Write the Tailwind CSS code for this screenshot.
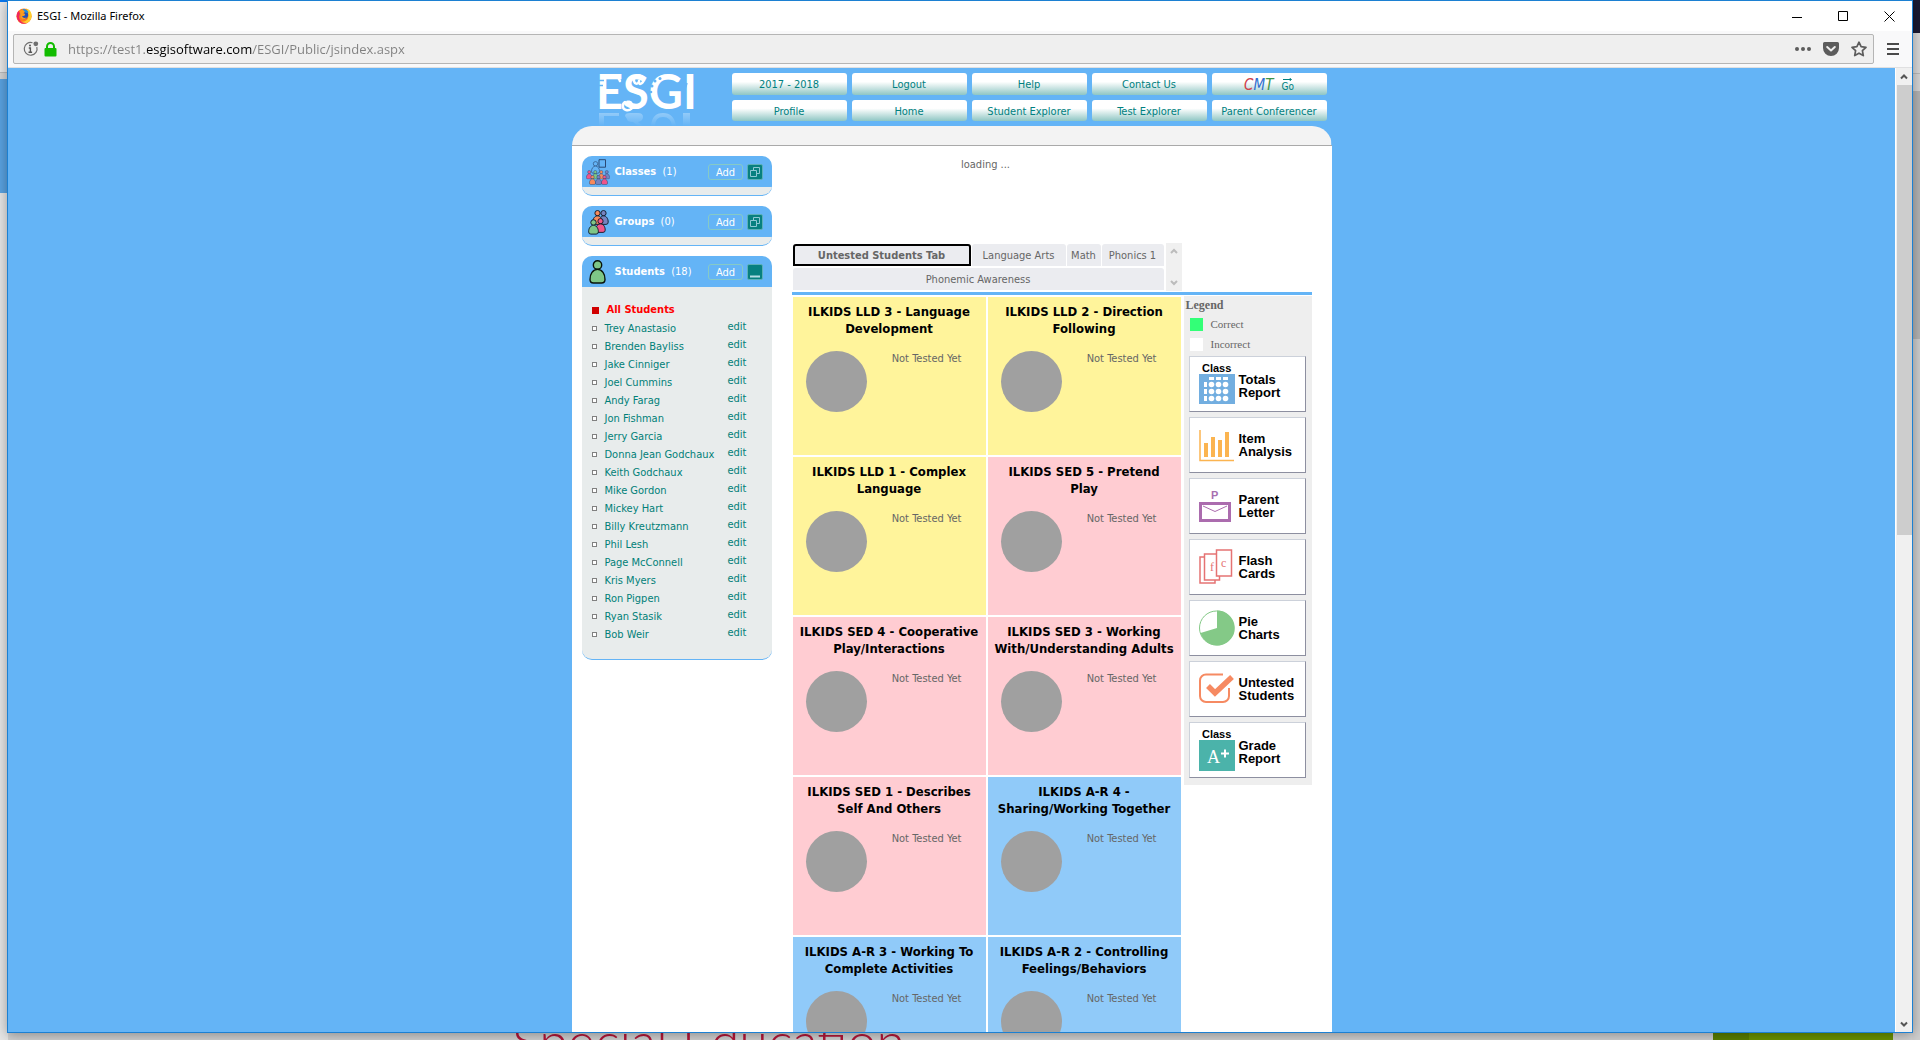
<!DOCTYPE html>
<html lang="en">
<head>
<meta charset="utf-8">
<title>ESGI</title>
<script src="https://cdn.jsdelivr.net/npm/@tailwindcss/browser@4"></script>
</head>
<body class="relative h-screen overflow-hidden bg-[#e4e4e4] font-['DejaVu_Sans_Condensed','DejaVu_Sans',sans-serif] text-[11px] leading-[18px] text-[#666]">

<!-- window lying behind the browser -->
<div class="absolute inset-0 flex justify-between overflow-hidden bg-linear-to-b from-[#e8e8e8] to-[#d2d2d2]" aria-hidden="true">
  <div class="flex w-2 flex-col">
    <div class="h-[2px] bg-[#0a78f0]"></div>
    <div class="h-[71px] border-b border-[#bbb] bg-[#e9e9e9]"></div>
    <div class="h-[6px] bg-[#d4d4d4]"></div>
    <div class="h-[114px] bg-[#5aa3e2]"></div>
    <div class="flex-1 bg-[#e6e6e6]"></div>
  </div>
  <div class="flex w-2 flex-col">
    <div class="h-[33px] bg-[#191932]"></div>
    <div class="h-[41px] border-b border-[#bbb] bg-[#dadada]"></div>
    <div class="h-[17px] bg-[#d6d6d6]"></div>
    <div class="h-[248px] bg-[#b4b4b4]"></div>
    <div class="flex-1 bg-[#cfcfcf]"></div>
  </div>
</div>
<p class="absolute bottom-[-28px] left-[512px] font-['Lato','Open_Sans',sans-serif] text-[52px] leading-[56px] font-light text-[#b5173a]">Special Education</p>
<div class="absolute right-[27px] bottom-0 flex h-[12px] w-[180px] bg-[#6b9400]"><div class="w-9 bg-[#5b8000]"></div></div>

<!-- browser window -->
<div class="relative mx-[7px] flex h-[calc(100vh-7px)] flex-col border border-[#1c80d2] bg-white shadow-[0_2px_12px_rgba(0,0,0,0.35)]">
  <header class="flex h-[30px] shrink-0 items-center pl-2 text-black">
    <svg class="mr-[5px] size-4" viewBox="0 0 16 16" aria-hidden="true">
      <circle cx="8" cy="8.200" r="7.600" fill="#ff7a18"/>
      <path d="M10 .6c3.800.8 6 4 5.600 8-.4 4-3.600 7-7.600 7-2.600 0-5-1.200-6.400-3.400 4 2.800 9 1.600 10.400-2 .9-2.600.5-5.600-2-9.600z" fill="#ffcf2e"/>
      <path d="M1 5.400C.2 9 1.200 12.400 3.800 14.400c2 1.500 5 1.700 7.200.6-3.600.4-6.800-1.400-7.600-4.600C3 8.400 3.200 6.800 4 5.600L2.400 2.800z" fill="#f0255e"/>
      <circle cx="8" cy="7" r="4.200" fill="#2450b8"/>
      <path d="M4 3c1.600-1.800 4.400-2.200 6.400-.8L9 4 7.400 5.200 9.200 6 8.400 7.800 6 8.200C7 10 9 10.400 10.600 9.200 9.800 11.800 5.400 12 4.200 9.200z" fill="#ff9a1c"/>
      <path d="M6.400 1.200C9 .8 11.600 2 12.600 4.600L10 5z" fill="#1f8fe0"/>
    </svg>
    <h1 class="flex-1 font-['Noto_Sans','Open_Sans',sans-serif]">ESGI - Mozilla Firefox</h1>
    <div class="flex items-center">
      <button class="flex h-[30px] w-[46px] items-center justify-center" aria-label="Minimize"><svg class="size-[11px]" viewBox="0 0 11 11"><path d="M0 6.500h10" stroke="#000"/></svg></button>
      <button class="flex h-[30px] w-[46px] items-center justify-center" aria-label="Maximize"><svg class="size-[11px]" viewBox="0 0 11 11"><path d="M.5.500h9v9h-9z" fill="none" stroke="#000"/></svg></button>
      <button class="flex h-[30px] w-[46px] items-center justify-center" aria-label="Close"><svg class="size-[11px]" viewBox="0 0 11 11"><path d="M.5.500l10 10M10.500.500l-10 10" stroke="#000"/></svg></button>
    </div>
  </header>

  <div class="flex h-[37px] shrink-0 items-center border-b border-[#e0e0e1] bg-[#f9f9fa] pr-[13px] pl-[5px]">
    <div class="flex h-[30px] flex-1 items-center rounded-xs border border-[#b5b5b5] bg-[#efefef] pr-[6px] pl-[9px]">
      <svg class="mr-[5px] size-4" viewBox="0 0 16 16" aria-hidden="true"><path d="M9.500 1.700A6.400 6.400 0 1 0 13.800 6" fill="none" stroke="#6e6e6e" stroke-width="1.200"/><circle cx="12.800" cy="2.800" r="2.400" fill="#6e6e6e"/><path d="M5.800 7h1.600v4M5.500 11.200h3.600" fill="none" stroke="#555" stroke-width="1.400"/><circle cx="7" cy="4.600" r="1" fill="#555"/></svg>
      <svg class="mr-[11px] h-[15px] w-[13px]" viewBox="0 0 13 15" aria-hidden="true"><path d="M3 7V4.500a3.500 3.500 0 0 1 7 0V7" fill="none" stroke="#12bc00" stroke-width="2"/><rect x=".5" y="6" width="12" height="8.500" rx="1" fill="#12bc00"/></svg>
      <input class="h-7 min-w-0 flex-1 bg-[linear-gradient(90deg,#808080_79px,#000_79px,#000_184px,#808080_184px)] bg-clip-text font-['Open_Sans','Noto_Sans',sans-serif] text-[13px] text-transparent outline-none" aria-label="Address" value="https://test1.esgisoftware.com/ESGI/Public/jsindex.aspx">
      <button class="mr-3" aria-label="Page actions"><svg class="h-4 w-4" viewBox="0 0 16 16" fill="#5c5c5c"><circle cx="2" cy="8" r="2"/><circle cx="8" cy="8" r="2"/><circle cx="14" cy="8" r="2"/></svg></button>
      <button class="mr-3" aria-label="Save to Pocket"><svg class="size-4" viewBox="0 0 16 16"><path d="M1.500 1h13A1.500 1.500 0 0 1 16 2.500V7A8 8 0 0 1 0 7V2.500A1.500 1.500 0 0 1 1.500 1z" fill="#5c5c5c"/><path d="M4.200 6L8 9.500 11.800 6" fill="none" stroke="#efefef" stroke-width="2" stroke-linecap="round" stroke-linejoin="round"/></svg></button>
      <button aria-label="Bookmark"><svg class="size-4" viewBox="0 0 16 16"><path d="M8 1.200l2.100 4.500 4.900.6-3.600 3.400.9 4.900L8 12.200l-4.300 2.400.9-4.900L1 6.300l4.900-.6z" fill="none" stroke="#5c5c5c" stroke-width="1.700" stroke-linejoin="round"/></svg></button>
    </div>
    <button class="ml-[13px]" aria-label="Menu"><svg class="h-3 w-3" viewBox="0 0 12 12"><path d="M0 1h12M0 6h12M0 11h12" stroke="#4a4a4a" stroke-width="2"/></svg></button>
  </div>

  <div class="flex min-h-0 flex-1">
    <div class="flex min-w-0 flex-1 justify-center overflow-hidden bg-[#64b4f6]">
      <div class="flex w-[760px] flex-col">
        <!-- banner -->
        <div class="flex h-[58px] shrink-0 pt-[5px] pr-[5px] pl-[25px]">
          <svg class="mr-[35px] h-[53px] w-[100px] overflow-visible" viewBox="0 0 100 53" role="img" aria-label="ESGI">
            <defs>
              <linearGradient id="fade" x1="0" x2="0" y1="0" y2="1"><stop offset="0" stop-color="#fff" stop-opacity=".3"/><stop offset="1" stop-color="#fff" stop-opacity="0"/></linearGradient>
            </defs>
            <text x="-1" y="36" fill="#fff" font-family="Lato, sans-serif" font-weight="700" font-size="47">ESGI</text>
            <!-- swirls and dots on the letters -->
            <g fill="none" stroke="#fff" stroke-width="2.500" stroke-linecap="round">
              <path d="M43 11c4-1 5-6 1-8s-8 1-7 5 5 3 5 0M28 29c-3 2-3 7 1 8s8-2 6-6-6-2-5 1"/>
              <path d="M16 3c4 0 6 2 7 5"/>
            </g>
            <g fill="#64b4f6"><circle cx="55" cy="13" r="1.500"/><circle cx="58" cy="8" r="1.500"/><circle cx="63" cy="5.500" r="1.500"/><circle cx="54" cy="19" r="1.300"/></g>
            <path d="M0 7.500h7M0 12.500h6M90 10l-3 10" stroke="#64b4f6" stroke-width="1.500"/>
            <path d="M2 40h20v3H7v10H2zM28 43q0-3 5-3h8q5 0 5 4t-5 5l5 4h-5l-5-4q-6 0-6-3zM54 53q1-13 12-13t13 13h-4q-1-9-9-9t-8 9zM86 40h7v13h-7z" fill="url(#fade)"/>
          </svg>
          <nav class="grid flex-1 grid-cols-5 grid-rows-[22px_21px] content-start gap-[5px]" id="menu"></nav>
        </div>
        <div class="h-5 shrink-0 rounded-t-[20px] border-b border-[#a9a9a9] bg-[#f3f3f3]"></div>

        <div class="flex flex-1 bg-white pl-[10px]">
          <!-- sidebar -->
          <aside class="flex w-[190px] shrink-0 flex-col gap-[10px] pt-[10px]">
            <section class="overflow-hidden rounded-[10px] border-b border-[#64b4f6] bg-[#e8ecec]">
              <div class="flex h-[31px] items-center bg-[#64b4f6] pr-[9px] pl-1 text-white">
                <svg class="mr-[5px] h-[26px] w-6" viewBox="0 0 24 26" aria-hidden="true">
                  <symbol id="person" viewBox="0 0 17 24"><circle cx="8.500" cy="5" r="4.200"/><path d="M1 19.500C.8 14 4 9.400 8.500 9.400S16.200 14 16 19.500Q16 23 12.500 23h-8Q1 23 1 19.500z"/></symbol>
                  <g stroke="#2b4a74" stroke-width="1.200">
                    <path d="M13 .7h6.500v7.500H13z" fill="none" stroke-width="1"/>
                    <use href="#person" x="5" y="2" width="9" height="13" fill="#64b4f6"/>
                    <use href="#person" x="0" y="11" width="6.500" height="9.500" fill="#f0568a"/><use href="#person" x="6" y="11" width="6.500" height="9.500" fill="#7ec687"/><use href="#person" x="12" y="11" width="6.500" height="9.500" fill="#f78a5c"/><use href="#person" x="17.500" y="11" width="6.500" height="9.500" fill="#7683c0"/>
                    <use href="#person" x="3" y="16" width="7" height="10" fill="#f78a5c"/><use href="#person" x="9" y="16" width="7" height="10" fill="#7683c0"/><use href="#person" x="15" y="16" width="7" height="10" fill="#f0568a"/>
                  </g>
                </svg>
                <h2 class="flex-1 pt-px"><b>Classes</b>&nbsp; (1)</h2>
                <button class="mr-1 h-4 w-[35px] rounded-[3px] border border-[#85cac6] pl-px leading-[15px]">Add</button>
                <button class="size-4 rounded-xs border border-[#5cb0b8] bg-[#078080]" aria-label="Expand classes"><svg class="size-[14px]" viewBox="0 0 14 14"><path d="M2.500 5.500h6v6h-6zM5.500 5V2.500h6v6H9" fill="none" stroke="#8cc8d4"/></svg></button>
              </div>
              <div class="h-2"></div>
            </section>
            <section class="overflow-hidden rounded-[10px] border-b border-[#64b4f6] bg-[#e8ecec]">
              <div class="flex h-[31px] items-center bg-[#64b4f6] pr-[9px] pl-1 text-white">
                <svg class="mr-[5px] h-[26px] w-6" viewBox="0 0 24 26" aria-hidden="true"><g stroke="#111c2c" stroke-width="1.500"><use href="#person" x="12" y="1" width="11" height="15" fill="#7683c0"/><use href="#person" x="6" y="1" width="11" height="15" fill="#f78a5c"/><use href="#person" x="9" y="9" width="11" height="15" fill="#f0568a"/><use href="#person" x="2" y="10" width="11" height="16" fill="#7ec687"/></g></svg>
                <h2 class="flex-1 pt-px"><b>Groups</b>&nbsp; (0)</h2>
                <button class="mr-1 h-4 w-[35px] rounded-[3px] border border-[#85cac6] pl-px leading-[15px]">Add</button>
                <button class="size-4 rounded-xs border border-[#5cb0b8] bg-[#078080]" aria-label="Expand groups"><svg class="size-[14px]" viewBox="0 0 14 14"><path d="M2.500 5.500h6v6h-6zM5.500 5V2.500h6v6H9" fill="none" stroke="#8cc8d4"/></svg></button>
              </div>
              <div class="h-2"></div>
            </section>
            <section class="overflow-hidden rounded-[10px] border-b border-[#64b4f6] bg-[#e8ecec]">
              <div class="flex h-[31px] items-center bg-[#64b4f6] pr-[9px] pl-1 text-white">
                <svg class="mr-[5px] h-[26px] w-6" viewBox="0 0 24 26" aria-hidden="true"><use href="#person" x="3" y="1" width="17" height="24" fill="#7ec687" stroke="#0a140a" stroke-width="1.400"/></svg>
                <h2 class="flex-1 pt-px"><b>Students</b>&nbsp; (18)</h2>
                <button class="mr-1 h-4 w-[35px] rounded-[3px] border border-[#85cac6] pl-px leading-[15px]">Add</button>
                <button class="size-4 rounded-xs border border-[#5cb0b8] bg-[#078080]" aria-label="Collapse students"><svg class="size-[14px]" viewBox="0 0 14 14"><path d="M2 11.500h10" stroke="#b4dce4" stroke-width="2"/></svg></button>
              </div>
              <ul class="pt-[14px] pr-[25px] pb-4 pl-[10px] text-[#008078]" id="students">
                <li class="flex h-[18px] items-center gap-2"><span class="size-[7px] bg-[#d00000]"></span><a href="#" class="font-bold text-[#ff0000]">All Students</a></li>
              </ul>
            </section>
          </aside>

          <!-- tests -->
          <main class="ml-5 flex w-[520px] flex-col">
            <p class="h-[97px] w-[388px] pt-[10px] text-center">loading ...</p>
            <div class="flex h-[49px] gap-[2px] pl-px">
              <div class="flex w-[371px] flex-col gap-[2px] pt-px" role="tablist">
                <div class="flex h-[22px] gap-px">
                  <button role="tab" aria-selected="true" class="w-[178px] rounded-t-[3px] border-2 border-black bg-[#ebecf0] pt-px font-bold">Untested Students Tab</button>
                  <button role="tab" class="w-[94px] rounded-t-[3px] bg-[#ebecf0] pt-[2px]">Language Arts</button>
                  <button role="tab" class="w-[34px] rounded-t-[3px] bg-[#ebecf0] pt-[2px]">Math</button>
                  <button role="tab" class="flex-1 rounded-t-[3px] bg-[#ebecf0] pt-[2px]">Phonics 1</button>
                </div>
                <button role="tab" class="h-[22px] rounded-t-[3px] bg-[#ebecf0] pt-[2px]">Phonemic Awareness</button>
              </div>
              <div class="flex h-12 w-4 flex-col items-center justify-between bg-[#f0f0f0] py-[5px]">
                <svg class="h-[7px] w-2" viewBox="0 0 8 7"><path d="M1 5l3-3 3 3" fill="none" stroke="#bcbcbc" stroke-width="2"/></svg>
                <svg class="h-[7px] w-2" viewBox="0 0 8 7"><path d="M1 2l3 3 3-3" fill="none" stroke="#bcbcbc" stroke-width="2"/></svg>
              </div>
            </div>
            <div class="h-[3px] shrink-0 bg-[#64b4f6]"></div>
            <div class="flex items-start justify-between pt-px">
              <div class="ml-px grid w-[388px] grid-cols-2 gap-[2px] pt-px" id="tests"></div>
              <aside class="w-32 bg-[#eee] pb-[7px] pl-[2px]">
                <div class="font-['Liberation_Serif',serif]">
                  <h3 class="text-xs leading-[18px] font-bold">Legend</h3>
                  <p class="flex h-5 items-center gap-2 pl-1 leading-5"><span class="size-[13px] bg-[#33ff77]"></span>Correct</p>
                  <p class="mb-[2px] flex h-5 items-center gap-2 pl-1 leading-5"><span class="size-[13px] bg-white"></span>Incorrect</p>
                </div>
                <div class="flex flex-col gap-[5px] pl-[3px] font-['Liberation_Sans',sans-serif] text-[13px] leading-[13px] font-bold text-black" id="reports"></div>
              </aside>
            </div>
          </main>
        </div>
      </div>
    </div>

    <!-- page scrollbar -->
    <div class="flex w-[17px] flex-col items-center border-l border-white bg-[#f0f0f0]">
      <svg class="my-[5px] h-[7px] w-2 shrink-0" viewBox="0 0 8 7"><path d="M1 5.500l3-3 3 3" fill="none" stroke="#555" stroke-width="2"/></svg>
      <div class="h-[450px] w-[15px] bg-[#cdcdcd]"></div>
      <svg class="mt-auto mb-1 h-[7px] w-2 shrink-0" viewBox="0 0 8 7"><path d="M1 1.500l3 3 3-3" fill="none" stroke="#555" stroke-width="2"/></svg>
    </div>
  </div>
</div>

<script>
const cmt = '<i class="text-[15px]"><span class="text-[#d0404a]">C</span><span class="text-[#2f6fd0]">M</span><span class="text-[#3c9448]">T</span></i><span class="ml-2 flex flex-col items-center text-[10px] leading-[11px]"><svg class="h-[3px] w-[9px]" viewBox="0 0 9 3"><path d="M0 1.500h8M6.500 0L8.500 1.500 6.500 3" fill="none" stroke="#008080"/></svg>Go</span>';
document.getElementById('menu').innerHTML = ['2017 - 2018','Logout','Help','Contact Us',cmt,'Profile','Home','Student Explorer','Test Explorer','Parent Conferencer']
  .map(t => `<a href="#" class="flex items-center justify-center rounded-[3px] bg-linear-to-b from-white from-40% to-[#8ec6c4] pt-[2px] whitespace-nowrap text-[#008080]">${t}</a>`).join('');

document.getElementById('students').insertAdjacentHTML('beforeend',
  ['Trey Anastasio','Brenden Bayliss','Jake Cinniger','Joel Cummins','Andy Farag','Jon Fishman','Jerry Garcia','Donna Jean Godchaux','Keith Godchaux','Mike Gordon','Mickey Hart','Billy Kreutzmann','Phil Lesh','Page McConnell','Kris Myers','Ron Pigpen','Ryan Stasik','Bob Weir']
  .map(n => `<li class="flex h-[18px] items-center"><span class="mr-2 size-[5px] border border-[#808080] bg-white"></span><a href="#" class="flex-1 pt-px whitespace-nowrap">${n}</a><a href="#" class="pb-[3px]">edit</a></li>`).join(''));

const yellow = 'h-[158px] bg-[#fff49b]', pink = 'h-[158px] bg-[#ffccd2]', blue = 'h-[158px] bg-[#90caf9]';
document.getElementById('tests').innerHTML = [
  [yellow,'ILKIDS LLD 3 - Language','Development'],[yellow,'ILKIDS LLD 2 - Direction','Following'],
  [yellow,'ILKIDS LLD 1 - Complex','Language'],[pink,'ILKIDS SED 5 - Pretend','Play'],
  [pink,'ILKIDS SED 4 - Cooperative','Play/Interactions'],[pink,'ILKIDS SED 3 - Working','With/Understanding Adults'],
  [pink,'ILKIDS SED 1 - Describes','Self And Others'],[blue,'ILKIDS A-R 4 -','Sharing/Working Together'],
  [blue,'ILKIDS A-R 3 - Working To','Complete Activities'],[blue,'ILKIDS A-R 2 - Controlling','Feelings/Behaviors']]
  .map(([c,a,b]) => `<article class="${c}"><h3 class="pt-[6px] text-center text-[13px] leading-[17px] font-bold whitespace-nowrap text-black">${a}<br>${b}</h3><div class="flex justify-between pt-[14px] pr-6 pl-[13px]"><span class="size-[61px] rounded-full bg-[#a0a0a0]"></span><span class="leading-4">Not Tested Yet</span></div></article>`).join('');

const icons = {
  totals: '<rect y="11" width="36" height="30" fill="#72aee0"/><path d="M10 14h5v3h-5zM17 14h5v3h-5zM24 14h5v3h-5zM5 19h3v5H5zM5 26h3v5H5zM5 33h3v5H5z" fill="#fff"/><g fill="#fff"><circle cx="12.500" cy="21.500" r="2.800"/><circle cx="19.500" cy="21.500" r="2.800"/><circle cx="26.500" cy="21.500" r="2.800"/><circle cx="12.500" cy="28.500" r="2.800"/><circle cx="19.500" cy="28.500" r="2.800"/><circle cx="26.500" cy="28.500" r="2.800"/><circle cx="12.500" cy="35.500" r="2.800"/><circle cx="19.500" cy="35.500" r="2.800"/><circle cx="26.500" cy="35.500" r="2.800"/></g>',
  item: '<path d="M1 6v30.500h34" fill="none" stroke="#fbb450" stroke-width="1.500"/><path d="M5 19h4v14H5zM12 13h4v20h-4zM19 16h4v17h-4zM26 8h4v25h-4z" fill="#fbb450"/>',
  letter: '<text x="12" y="14" font-size="11" fill="#a86fb0">P</text><rect x="1.500" y="18.500" width="29" height="17" fill="none" stroke="#ab6cae" stroke-width="3"/><path d="M4 21l12 5.500L28 21" fill="none" stroke="#ab6cae"/>',
  flash: '<g fill="#fff" stroke="#e57373" stroke-width="1.500"><rect x="1" y="11" width="15" height="26"/><rect x="5.500" y="8" width="15" height="26"/><rect x="17.500" y="4" width="15" height="26"/></g><g fill="#e57373" font-family="Liberation Serif" font-size="12" font-weight="normal"><text x="11" y="25">f</text><text x="22" y="21">c</text></g>',
  pie: '<circle cx="17.500" cy="21" r="17" fill="#fff" stroke="#84c987"/><path d="M18 21V3.500A17.500 17.500 0 1 1 1.500 26z" fill="#84c987"/>',
  untested: '<path d="M24 6.500H7a6 6 0 0 0-6 6V28a6 6 0 0 0 6 6h17a6 6 0 0 0 6-6V20" fill="none" stroke="#f68a62" stroke-width="2"/><path d="M9 18l7 7L33 9" fill="none" stroke="#f68a62" stroke-width="5.500"/>',
  grade: '<rect y="11" width="36" height="31" fill="#4bb3aa"/><text x="8" y="34" fill="#fff" font-family="Liberation Serif" font-size="18" font-weight="normal">A</text><path d="M26 20.500v8M22 24.500h8" stroke="#fff" stroke-width="2"/>'
};
const klass = '<text x="3" y="9" font-size="11">Class</text>';
document.getElementById('reports').innerHTML = [['totals','Totals','Report',klass],['item','Item','Analysis',''],['letter','Parent','Letter',''],['flash','Flash','Cards',''],['pie','Pie','Charts',''],['untested','Untested','Students',''],['grade','Grade','Report',klass]]
  .map(([k,a,b,t]) => `<button class="flex h-14 w-[117px] items-center border border-t-[#ccd1da] border-r-[#8d8fa0] border-b-[#8d8fa0] border-l-[#ccd1da] bg-white pl-[9px] text-left"><svg class="mr-1 h-[42px] w-9" viewBox="0 0 36 42" aria-hidden="true">${t}${icons[k]}</svg><span class="${t ? 'pt-[3px]' : ''}">${a}<br>${b}</span></button>`).join('');
</script>
</body>
</html>
